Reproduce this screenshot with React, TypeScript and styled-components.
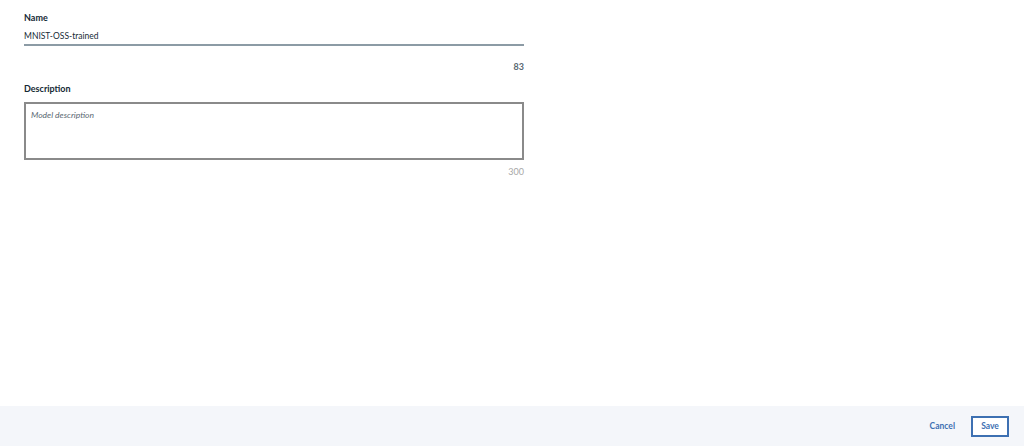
import React from "react";
import styled, { createGlobalStyle } from "styled-components";

const Global = createGlobalStyle`
  html, body { margin: 0; padding: 0; background: #ffffff; }
  body { font-family: "Lato", "Open Sans", sans-serif; }
  * { box-sizing: border-box; }
`;

const Page = styled.div`
  width: 1024px;
  height: 446px;
  display: flex;
  flex-direction: column;
  background: #ffffff;
`;

const Content = styled.div`
  flex: 1;
  padding: 11px 24px 0 24px;
  display: flex;
  flex-direction: column;
`;

const Field = styled.div`
  width: 500px;
  display: flex;
  flex-direction: column;
`;

const Label = styled.label`
  font-size: 9px;
  font-weight: 700;
  color: #152935;
  line-height: 14px;
  height: 14px;
`;

const NameInput = styled.div`
  margin-top: 5px;
  font-size: 8.5px;
  color: #152935;
  line-height: 12px;
  height: 16px;
  border-bottom: 2px solid #8c9ba5;
`;

const Counter = styled.div<{ $muted?: boolean }>`
  text-align: right;
  font-size: 9px;
  font-weight: ${(p) => (p.$muted ? 400 : 700)};
  color: ${(p) => (p.$muted ? "#a7a7a7" : "#5a6872")};
  line-height: 12px;
  margin-top: ${(p) => (p.$muted ? "6px" : "15px")};
`;

const Spacer = styled.div`
  height: 9px;
`;

const TextArea = styled.div`
  margin-top: 6px;
  height: 58px;
  border: 2px solid #8a8a8a;
  padding: 5px 5px;
  font-size: 8.5px;
  font-style: italic;
  color: #5a6872;
  line-height: 12px;
`;

const Footer = styled.div`
  height: 40px;
  background: #f4f6fa;
  display: flex;
  align-items: center;
  justify-content: flex-end;
  padding-right: 15px;
  gap: 16px;
`;

const GhostButton = styled.button`
  background: transparent;
  border: none;
  font-family: inherit;
  font-size: 8.5px;
  font-weight: 700;
  color: #3d70b2;
  padding: 0;
  cursor: pointer;
`;

const OutlineButton = styled.button`
  background: #ffffff;
  border: 2px solid #3d70b2;
  font-family: inherit;
  font-size: 8.5px;
  font-weight: 700;
  color: #3d70b2;
  width: 38px;
  height: 21px;
  padding: 0;
  cursor: pointer;
`;

export default function App() {
  return (
    <Page>
      <Global />
      <Content>
        <Field>
          <Label>Name</Label>
          <NameInput>MNIST-OSS-trained</NameInput>
          <Counter>83</Counter>
        </Field>
        <Spacer />
        <Field>
          <Label>Description</Label>
          <TextArea>Model description</TextArea>
          <Counter $muted>300</Counter>
        </Field>
      </Content>
      <Footer>
        <GhostButton>Cancel</GhostButton>
        <OutlineButton>Save</OutlineButton>
      </Footer>
    </Page>
  );
}
